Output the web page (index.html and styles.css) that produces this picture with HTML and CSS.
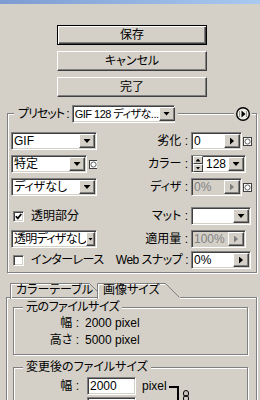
FILE: index.html
```html
<!DOCTYPE html>
<html lang="ja">
<head>
<meta charset="utf-8">
<link rel="stylesheet" href="styles.css">
</head>
<body>
<div class="titlebar"></div>

<!-- 保存・キャンセル・完了 -->
<div class="btns">
    <div class="btn default">保存</div>
    <div class="btn">キャンセル</div>
    <div class="btn">完了</div>
</div>

<!-- プリセット -->
<div class="group preset">
    <div class="group-head">
        <div class="legend">
            <span class="preset-lbl">プリセット :</span>
            <div class="field preset-sel"><span class="val squeeze">GIF 128 ディザな...</span><span class="drop"></span></div>
        </div>
        <div class="menu-btn">
            <svg width="14" height="14" viewBox="0 0 14 14"><circle cx="7" cy="7" r="6.3" fill="#eeece6" stroke="#000" stroke-width="1.4"/><path d="M3.5 4v6M10.5 4v6" stroke="#9a978f"/><path d="M5.5 3.5L9.5 7 5.5 10.5z" fill="#000"/></svg>
        </div>
    </div>
    <div class="opts">
        <div class="field w86"><span class="val">GIF</span><span class="drop"></span></div>
        <div class="lbl">劣化 :</div>
        <div class="ctl">
            <div class="field w51"><span class="val">0</span><span class="drop r"></span></div>
            <svg class="dot" width="9" height="9"><rect x=".5" y=".5" width="8" height="8" fill="#fff" stroke="#404040"/><circle cx="4.5" cy="4.5" r="2.6" fill="none" stroke="#606060"/></svg>
        </div>

        <div class="ctl">
            <div class="field w76"><span class="val">特定</span><span class="drop"></span></div>
            <svg class="dot" width="9" height="9"><rect x=".5" y=".5" width="8" height="8" fill="#fff" stroke="#404040"/><circle cx="4.5" cy="4.5" r="2.6" fill="none" stroke="#606060"/></svg>
        </div>
        <div class="lbl">カラー :</div>
        <div class="ctl">
            <div class="field w55 nopad">
                <span class="spin"><span class="sb up"></span><span class="sb dn"></span></span>
                <span class="val num">128</span><span class="drop"></span>
            </div>
        </div>

        <div class="field w86"><span class="val">ディザなし</span><span class="drop"></span></div>
        <div class="lbl">ディザ :</div>
        <div class="ctl">
            <div class="field w51 off"><span class="val">0%</span><span class="drop r"></span></div>
            <svg class="dot" width="9" height="9"><rect x=".5" y=".5" width="8" height="8" fill="#fff" stroke="#404040"/><circle cx="4.5" cy="4.5" r="2.6" fill="none" stroke="#606060"/></svg>
        </div>

        <div class="check-row">
            <span class="check"><svg width="7" height="7"><path d="M.8 3.2l2 2.2L6.3 1" fill="none" stroke="#000" stroke-width="1.7"/></svg></span>
            <span>透明部分</span>
        </div>
        <div class="lbl">マット :</div>
        <div class="ctl">
            <div class="field w60"><span class="val"></span><span class="drop"></span></div>
        </div>

        <div class="field w86"><span class="val tighter">透明ディザなし</span><span class="drop n"></span></div>
        <div class="lbl">適用量 :</div>
        <div class="ctl">
            <div class="field w55 off"><span class="val">100%</span><span class="drop r"></span></div>
        </div>

        <div class="check-row">
            <span class="check"></span>
            <span class="tight">インターレース</span>
        </div>
        <div class="lbl tight">Web スナップ :</div>
        <div class="ctl">
            <div class="field w60"><span class="val">0%</span><span class="drop r"></span></div>
        </div>
    </div>
</div>

<!-- タブ -->
<div class="tabs">
    <div class="tab t1">
        <svg width="88" height="16"><path d="M.5 16V.5h79L87 8" fill="none" stroke="#808080"/><path d="M1.5 16V1.5h78" fill="none" stroke="#fff"/></svg>
        <span>カラーテーブル</span>
    </div>
    <div class="tab t2">
        <svg width="84" height="16"><path d="M0 16V0h68.5L83 14.5V16z" fill="#d4d0c8"/><path d="M.5 16V.5h68L82 14" fill="none" stroke="#808080"/><path d="M1.5 16V1.5h66.5" fill="none" stroke="#fff"/></svg>
        <span>画像サイズ</span>
    </div>
</div>
<div class="panel">
    <div class="group orig">
        <div class="group-head"><div class="legend tight">元のファイルサイズ</div></div>
        <div class="info">
            <span class="k">幅 :</span><span>2000 pixel</span>
            <span class="k">高さ :</span><span>5000 pixel</span>
        </div>
    </div>
    <div class="group changed">
        <div class="group-head"><div class="legend">変更後のファイルサイズ</div></div>
        <div class="size-row">
            <span class="k">幅 :</span>
            <div class="field w49"><span class="val">2000</span></div>
            <span class="unit">pixel</span>
            <svg class="link" width="24" height="18"><path d="M0 9h10v2H0zM8 9h2v20H8z" fill="#000"/><rect x="14.5" y="13.5" width="5" height="6" rx="2.5" fill="#c8c4bc" stroke="#000"/><rect x="14.5" y="18.5" width="5" height="6" rx="2.5" fill="none" stroke="#000"/></svg>
        </div>
        <div class="size-row">
            <span class="k"></span>
            <div class="field w49"><span class="val"></span></div>
        </div>
    </div>
</div>
</body>
</html>
```

FILE: styles.css
```css
*{margin:0;padding:0;box-sizing:border-box;}
body{width:260px;height:400px;overflow:hidden;background:#d4d0c8;color:#000;font:12px/16px "Liberation Sans","Noto Sans CJK JP",sans-serif;font-feature-settings:"palt";}

/* 上のタイトルバーの端 */
.titlebar{height:4px;background:linear-gradient(to right,#7c9bd2,#a8caf0);}

/* ボタン */
.btns{display:flex;flex-direction:column;gap:6px;width:150px;margin:21px 0 0 57px;}
.btn{height:20px;line-height:18px;text-align:center;border:1px solid;border-color:#fff #404040 #404040 #fff;box-shadow:inset -1px -1px #808080;}
.btn.default{border-color:#000;box-shadow:inset 1px 1px #fff,inset -1px -1px #404040,inset -2px -2px #808080;}

/* 枠線 */
.group{border:1px solid #808080;box-shadow:inset 1px 1px #fff,1px 1px #fff;}
.group-head{display:flex;align-items:center;}
.legend{display:flex;align-items:center;background:#d4d0c8;padding:0 3px;white-space:nowrap;}
.preset{margin:16px 3px 0 7px;padding:0 3px 3px;}
.preset .group-head{justify-content:space-between;height:17px;margin:-9px 1px 0 3px;}
.preset .legend{gap:3px;padding:0 3px 0 4px;}
.preset-lbl{letter-spacing:-1px;}
.preset-sel{width:103px;}
.menu-btn{display:flex;background:#d4d0c8;padding:0 2px;}

/* 入力欄 */
.field{height:18px;display:flex;align-items:center;padding-left:2px;background:#fff;border:1px solid;border-color:#808080 #fff #fff #808080;box-shadow:inset 1px 1px #404040,inset -1px -1px #d4d0c8;flex:none;}
.field.nopad{padding-left:1px;}
.field.off{background:#d4d0c8;color:#808080;}
.val{flex:1;overflow:hidden;white-space:nowrap;line-height:16px;}
.val.num{margin-left:3px;}
.tight{letter-spacing:-0.5px;}
.tighter{letter-spacing:-0.7px;}
.squeeze{font-size:11px;letter-spacing:-0.5px;overflow:visible;}
.drop{width:16px;height:14px;margin-right:1px;flex:none;display:flex;align-items:center;justify-content:center;border:1px solid;border-color:#fff #404040 #404040 #fff;box-shadow:inset -1px -1px #808080;background:#d4d0c8;}
.drop::before{content:"";width:7px;height:4px;background:#000;clip-path:polygon(0 0,100% 0,50% 100%);}
.drop.r::before{width:4px;height:7px;clip-path:polygon(0 0,100% 50%,0 100%);}
.drop.n{width:9px;}
.drop.n::before{width:5px;height:3px;}
.off .drop::before{background:#808080;}
.w86{width:86px;}
.w76{width:76px;}
.w60{width:60px;}
.w55{width:55px;}
.w51{width:51px;}
.w49{width:49px;}

.spin{display:flex;flex-direction:column;width:10px;height:16px;flex:none;}
.sb{height:8px;display:flex;align-items:center;justify-content:center;border:1px solid;border-color:#fff #404040 #404040 #fff;background:#d4d0c8;}
.sb::before{content:"";width:5px;height:3px;background:#000;}
.sb.up::before{clip-path:polygon(50% 0,100% 100%,0 100%);}
.sb.dn::before{clip-path:polygon(0 0,100% 0,50% 100%);}

/* 最適化の設定 */
.opts{display:grid;grid-template-columns:86px 92px 1fr;grid-template-rows:23px 23px 29px 23px 21px 18px;align-items:start;margin-top:10px;}
.lbl{text-align:right;padding-right:1px;line-height:18px;white-space:nowrap;}
.ctl{display:flex;align-items:center;gap:1px;height:18px;}
.opts .lbl + .ctl{padding-left:2px;}
.ctl .w76 + .dot{margin-left:1px;}
.check-row{display:flex;align-items:center;gap:7px;height:18px;padding-left:2px;white-space:nowrap;}
.check{width:11px;height:11px;flex:none;display:flex;align-items:center;justify-content:center;background:#fff;border:1px solid;border-color:#808080 #fff #fff #808080;box-shadow:inset 1px 1px #404040,inset -1px -1px #d4d0c8;}

/* タブ */
.tabs{display:flex;height:14px;margin:10px 3px 0 6px;padding-left:4px;}
.tab{position:relative;height:16px;padding-left:6px;line-height:15px;white-space:nowrap;}
.tab svg{position:absolute;left:0;top:0;}
.tab span{position:relative;}
.t1{width:88px;}
.t2{width:84px;margin-left:-1px;}
.panel{height:110px;margin:0 3px 0 6px;padding:0 8px 0 6px;border:1px solid #808080;border-bottom:0;box-shadow:inset 1px 1px #fff,1px 0 #fff;}
.panel .group-head{height:14px;margin:-8px 0 0 9px;}
.panel .legend{line-height:14px;}
.orig{margin-top:9px;}
.changed{margin-top:12px;}
.info{display:grid;grid-template-columns:65px 1fr;column-gap:6px;row-gap:3px;margin-top:2px;padding-bottom:7px;line-height:14px;}
.k{text-align:right;}
.size-row{display:flex;align-items:center;height:18px;margin-top:3px;}
.size-row + .size-row{margin-top:2px;}
.size-row .k{width:65px;flex:none;}
.size-row .field{margin-left:8px;}
.unit{margin-left:6px;}
.link{margin-left:2px;overflow:visible;flex:none;}
```
